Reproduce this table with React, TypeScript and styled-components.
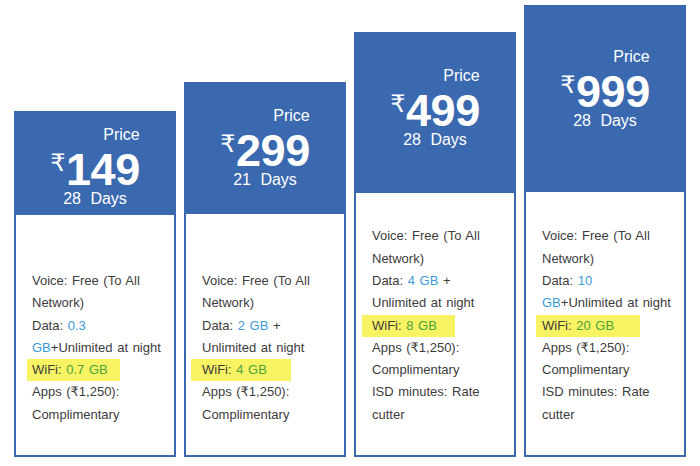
import React from "react";
import styled, { createGlobalStyle } from "styled-components";

const Global = createGlobalStyle`
  html, body { margin: 0; padding: 0; background: #ffffff; }
  body { font-family: "Liberation Sans", Arial, "DejaVu Sans", sans-serif; }
`;

const BLUE = "#3a69b0";

const Row = styled.div`
  display: flex;
  align-items: flex-end;
  gap: 8px;
  height: 466px;
  box-sizing: border-box;
  padding: 0 0 9px 14px;
`;

const Card = styled.div<{ $h: number }>`
  width: 162px;
  height: ${(p) => p.$h}px;
  display: flex;
  flex-direction: column;
  flex: 0 0 auto;
`;

const Header = styled.div<{ $h: number; $pt: number }>`
  height: ${(p) => p.$h}px;
  box-sizing: border-box;
  padding-top: ${(p) => p.$pt}px;
  background: ${BLUE};
  display: flex;
  justify-content: center;
  color: #ffffff;
  flex: 0 0 auto;
`;

const PriceBlock = styled.div`
  display: inline-flex;
  flex-direction: column;
  align-items: stretch;
`;

const Label = styled.div`
  font-size: 16px;
  line-height: 20px;
  text-align: right;
`;

const Amount = styled.div`
  font-size: 45px;
  font-weight: 700;
  line-height: 40px;
  padding-top: 5px;
  white-space: nowrap;
  letter-spacing: -0.5px;
`;

const Rupee = styled.span`
  display: inline-block;
  vertical-align: top;
  margin-top: 1px;
  margin-right: 1px;
  font-family: "DejaVu Sans", sans-serif;
  font-weight: 400;
  font-size: 24px;
  line-height: 24px;
`;

const Days = styled.div`
  font-size: 16px;
  line-height: 18px;
  text-align: center;
  word-spacing: 5px;
`;

const Body = styled.div`
  flex: 1;
  background: #ffffff;
  border: 2px solid ${BLUE};
  border-top: none;
  display: flex;
  flex-direction: column;
  justify-content: flex-end;
  padding: 0 8px 29px 16px;
`;

const Line = styled.div`
  font-size: 13px;
  line-height: 22.3px;
  color: #3c3c3c;
  white-space: nowrap;
  word-spacing: 1px;
`;

const DataVal = styled.span`
  color: #3d9bd8;
`;

const WifiVal = styled.span`
  color: #4aa33f;
`;

const Highlight = styled.span<{ $l: number; $r: number }>`
  display: inline-block;
  background: #f8f362;
  margin-left: -${(p) => p.$l}px;
  padding: 0 ${(p) => p.$r}px 0 ${(p) => p.$l}px;
  line-height: 22px;
`;

type Plan = {
  price: string;
  days: string;
  cardH: number;
  headH: number;
  pt: number;
  hl: [number, number];
  wifi: string;
  data: React.ReactNode[];
  isd: boolean;
};

const plans: Plan[] = [
  {
    price: "149",
    days: "28 Days",
    cardH: 346,
    headH: 104,
    pt: 14,
    hl: [5, 12],
    wifi: "0.7 GB",
    data: [
      <>Data: <DataVal>0.3</DataVal></>,
      <><DataVal>GB</DataVal>+Unlimited at night</>,
    ],
    isd: false,
  },
  {
    price: "299",
    days: "21 Days",
    cardH: 375,
    headH: 132,
    pt: 24,
    hl: [11, 24],
    wifi: "4 GB",
    data: [<>Data: <DataVal>2 GB</DataVal> +</>, <>Unlimited at night</>],
    isd: false,
  },
  {
    price: "499",
    days: "28 Days",
    cardH: 425,
    headH: 161,
    pt: 34,
    hl: [10, 18],
    wifi: "8 GB",
    data: [<>Data: <DataVal>4 GB</DataVal> +</>, <>Unlimited at night</>],
    isd: true,
  },
  {
    price: "999",
    days: "28 Days",
    cardH: 452,
    headH: 187,
    pt: 42,
    hl: [6, 26],
    wifi: "20 GB",
    data: [
      <>Data: <DataVal>10</DataVal></>,
      <><DataVal>GB</DataVal>+Unlimited at night</>,
    ],
    isd: true,
  },
];

export default function App() {
  return (
    <>
      <Global />
      <Row>
        {plans.map((p) => (
          <Card key={p.price} $h={p.cardH}>
            <Header $h={p.headH} $pt={p.pt}>
              <PriceBlock>
                <Label>Price</Label>
                <Amount>
                  <Rupee>₹</Rupee>
                  {p.price}
                </Amount>
                <Days>{p.days}</Days>
              </PriceBlock>
            </Header>
            <Body>
              <Line>Voice: Free (To All</Line>
              <Line>Network)</Line>
              {p.data.map((d, i) => (
                <Line key={i}>{d}</Line>
              ))}
              <Line>
                <Highlight $l={p.hl[0]} $r={p.hl[1]}>
                  WiFi: <WifiVal>{p.wifi}</WifiVal>
                </Highlight>
              </Line>
              <Line>Apps (₹1,250):</Line>
              <Line>Complimentary</Line>
              {p.isd && (
                <>
                  <Line>ISD minutes: Rate</Line>
                  <Line>cutter</Line>
                </>
              )}
            </Body>
          </Card>
        ))}
      </Row>
    </>
  );
}
